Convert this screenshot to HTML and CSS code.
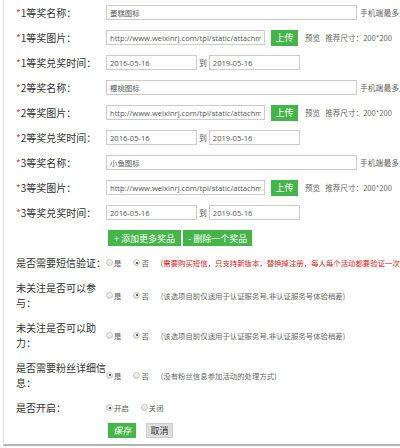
FILE: index.html
```html
<!DOCTYPE html>
<html lang="zh-CN">
<head>
  <meta charset="UTF-8">
  <title>奖品设置</title>
  <link rel="stylesheet" href="styles.css">
</head>
<body>
  <div class="page">
    <div class="prize-row">
      <label class="lbl"><i>*</i>1等奖名称：</label>
      <input class="ipt ipt-name" value="蛋糕图标">
      <span class="hint">手机端最多显示6个字</span>
    </div>
    <div class="prize-row">
      <label class="lbl"><i>*</i>1等奖图片：</label>
      <input class="ipt ipt-url" value="http://www.weixinrj.com/tpl/static/attachment/images/prize.png">
      <button class="btn btn-up">上传</button>
      <span class="tip">预览</span>
      <span class="tip">推荐尺寸：200*200</span>
    </div>
    <div class="prize-row">
      <label class="lbl"><i>*</i>1等奖兑奖时间：</label>
      <input class="ipt ipt-date" value="2016-05-16">
      <span class="to">到</span>
      <input class="ipt ipt-date" value="2019-05-16">
    </div>

    <div class="prize-row">
      <label class="lbl"><i>*</i>2等奖名称：</label>
      <input class="ipt ipt-name" value="樱桃图标">
      <span class="hint">手机端最多显示6个字</span>
    </div>
    <div class="prize-row">
      <label class="lbl"><i>*</i>2等奖图片：</label>
      <input class="ipt ipt-url" value="http://www.weixinrj.com/tpl/static/attachment/images/prize.png">
      <button class="btn btn-up">上传</button>
      <span class="tip">预览</span>
      <span class="tip">推荐尺寸：200*200</span>
    </div>
    <div class="prize-row">
      <label class="lbl"><i>*</i>2等奖兑奖时间：</label>
      <input class="ipt ipt-date" value="2016-05-16">
      <span class="to">到</span>
      <input class="ipt ipt-date" value="2019-05-16">
    </div>

    <div class="prize-row">
      <label class="lbl"><i>*</i>3等奖名称：</label>
      <input class="ipt ipt-name" value="小鱼图标">
      <span class="hint">手机端最多显示6个字</span>
    </div>
    <div class="prize-row">
      <label class="lbl"><i>*</i>3等奖图片：</label>
      <input class="ipt ipt-url" value="http://www.weixinrj.com/tpl/static/attachment/images/prize.png">
      <button class="btn btn-up">上传</button>
      <span class="tip">预览</span>
      <span class="tip">推荐尺寸：200*200</span>
    </div>
    <div class="prize-row">
      <label class="lbl"><i>*</i>3等奖兑奖时间：</label>
      <input class="ipt ipt-date" value="2016-05-16">
      <span class="to">到</span>
      <input class="ipt ipt-date" value="2019-05-16">
    </div>

    <div class="add-row">
      <button class="btn btn-add">+ 添加更多奖品</button>
      <button class="btn btn-add">- 删除一个奖品</button>
    </div>

    <div class="opt-row">
      <label class="lbl">是否需要短信验证：</label>
      <span class="radio"></span><span class="rtxt">是</span>
      <span class="radio on"></span><span class="rtxt">否</span>
      <span class="note red">(需要购买短信，只支持新版本，替换掉注册，每人每个活动都要验证一次)</span>
    </div>
    <div class="opt-row">
      <label class="lbl">未关注是否可以参与：</label>
      <span class="radio"></span><span class="rtxt">是</span>
      <span class="radio on"></span><span class="rtxt">否</span>
      <span class="note">(该选项目前仅适用于认证服务号,非认证服务号体验稍差)</span>
    </div>
    <div class="opt-row">
      <label class="lbl">未关注是否可以助力：</label>
      <span class="radio"></span><span class="rtxt">是</span>
      <span class="radio on"></span><span class="rtxt">否</span>
      <span class="note">(该选项目前仅适用于认证服务号,非认证服务号体验稍差)</span>
    </div>
    <div class="opt-row">
      <label class="lbl">是否需要粉丝详细信息：</label>
      <span class="radio on"></span><span class="rtxt">是</span>
      <span class="radio"></span><span class="rtxt">否</span>
      <span class="note">(没有粉丝信息参加活动的处理方式)</span>
    </div>
    <div class="opt-row">
      <label class="lbl">是否开启：</label>
      <span class="radio on"></span><span class="rtxt">开启</span>
      <span class="radio"></span><span class="rtxt">关闭</span>
    </div>

    <div class="save-row">
      <button class="btn btn-save">保存</button>
      <button class="btn btn-cancel">取消</button>
    </div>
  </div>
</body>
</html>
```

FILE: styles.css
```css
body { margin: 0; overflow: hidden; background: #fff; font-family: "Noto Sans CJK SC", sans-serif; color: #333; }
.page { margin-left: 3px; height: 446px; border-left: 1px solid #e4e4e4; border-bottom: 2px solid #b4b4b4; padding-left: 12px; box-sizing: border-box; white-space: nowrap; overflow: hidden; }

.lbl { width: 90px; font-size: 10px; line-height: 15px; white-space: normal; color: #333; }
.lbl i { font-style: normal; color: #e4393c; }

.prize-row, .opt-row, .add-row, .save-row { display: flex; align-items: center; }
.prize-row > *, .opt-row > *, .add-row > *, .save-row > * { flex: none; }

.prize-row { height: 25px; }
.ipt { height: 15px; box-sizing: border-box; border: 1px solid #ccc; padding: 0 3px; margin: 0; font-family: "Open Sans", "Noto Sans CJK SC", sans-serif; font-size: 7.6px; color: #555; background: #fff; outline: none; }
.ipt-name { width: 251px; font-family: "Noto Sans CJK SC", sans-serif; font-size: 7.4px; }
.ipt-url { width: 159px; }
.ipt-date { width: 91px; }
.hint { margin-left: 3px; font-size: 7.8px; color: #666; }
.tip { margin-left: 7px; font-size: 7.6px; color: #666; }
.tip + .tip { margin-left: 5px; }
.to { margin: 0 2px; font-size: 7.8px; color: #555; }

.btn { border: 0; margin: 0; padding: 0; font-family: "Noto Sans CJK SC", sans-serif; cursor: pointer; }
.btn-up { margin-left: 6px; width: 27px; height: 16px; background: #44b549; color: #fff; font-size: 9px; }
.add-row { gap: 2px; margin: 5px 0 0 92px; }
.btn-add { height: 16px; padding: 0 6px; background: #44b549; color: #fff; font-size: 9px; }
.btn-add + .btn-add { padding: 0 5px; }

.opt-row { margin-top: 10px; }
.add-row + .opt-row { margin-top: 9px; }
.radio { width: 7px; height: 7px; box-sizing: border-box; border-radius: 50%; border: 1px solid #c4c4c4; background: linear-gradient(#f4f4f4, #e2e2e2); position: relative; }
.radio.on::after { content: ""; position: absolute; left: 1.5px; top: 1.5px; width: 2px; height: 2px; border-radius: 50%; background: #333; }
.rtxt { font-size: 7.4px; color: #555; margin: 0 12px 0 1px; }
.note { font-size: 7.4px; color: #666; }
.note.red { color: #e02020; }

.save-row { gap: 10px; margin: 8px 0 0 92px; }
.btn-save { width: 28px; height: 15px; background: #44b549; color: #fff; font-size: 9px; font-style: italic; }
.btn-cancel { width: 27px; height: 15px; background: #dedede; border: 1px solid #ccc; color: #333; font-size: 9px; box-sizing: border-box; }
```
